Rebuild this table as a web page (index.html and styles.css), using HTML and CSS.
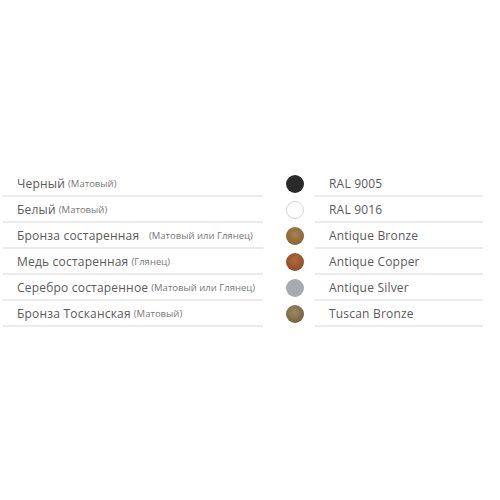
FILE: index.html
```html
<!DOCTYPE html>
<html lang="ru">
<head>
<meta charset="utf-8">
<link rel="stylesheet" href="styles.css">
</head>
<body>
<div class="colors">
  <div class="row">
    <div class="name">Черный <span class="note">(Матовый)</span></div>
    <div class="swatch"><span class="dot black"></span></div>
    <div class="code">RAL 9005</div>
  </div>
  <div class="row">
    <div class="name">Белый <span class="note">(Матовый)</span></div>
    <div class="swatch"><span class="dot white"></span></div>
    <div class="code">RAL 9016</div>
  </div>
  <div class="row">
    <div class="name">Бронза состаренная &nbsp;<span class="note">(Матовый или Глянец)</span></div>
    <div class="swatch"><span class="dot bronze"></span></div>
    <div class="code">Antique Bronze</div>
  </div>
  <div class="row">
    <div class="name">Медь состаренная <span class="note">(Глянец)</span></div>
    <div class="swatch"><span class="dot copper"></span></div>
    <div class="code">Antique Copper</div>
  </div>
  <div class="row">
    <div class="name">Серебро состаренное<span class="note">(Матовый или Глянец)</span></div>
    <div class="swatch"><span class="dot silver"></span></div>
    <div class="code">Antique Silver</div>
  </div>
  <div class="row">
    <div class="name">Бронза Тосканская <span class="note">(Матовый)</span></div>
    <div class="swatch"><span class="dot tuscan"></span></div>
    <div class="code">Tuscan Bronze</div>
  </div>
</div>
</body>
</html>
```
FILE: styles.css
```css
html, body {
  margin: 0;
  padding: 0;
  background: #fff;
}
body {
  font-family: "Open Sans", "Noto Sans", sans-serif;
  color: #5a5a5a;
}
.colors {
  margin: 171px 0 0 3px;
  display: flex;
  flex-direction: column;
}
.row {
  display: grid;
  grid-template-columns: 260px 52px 168px;
  height: 26px;
}
.name, .code {
  border-bottom: 2px solid #ebebeb;
  display: flex;
  align-items: center;
  padding-left: 14px;
  font-size: 12px;
  white-space: nowrap;
  letter-spacing: 0.2px;
}
.note {
  font-size: 9.5px;
  color: #777;
  margin-left: 3px;
  letter-spacing: 0;
}
.swatch {
  display: flex;
  align-items: center;
  padding-left: 23px;
}
.dot {
  width: 18px;
  height: 18px;
  border-radius: 50%;
  box-sizing: border-box;
  display: block;
}
.black { background: #2a2a2a; }
.white { background: #fff; border: 1px solid #d6d6d6; }
.bronze { background: radial-gradient(circle at 50% 40%, #a88350, #8a6535 70%, #6e4f28); }
.copper { background: radial-gradient(circle at 50% 40%, #b06a3e, #934d2a 70%, #6e3a20); }
.silver { background: #a9aab0; }
.tuscan { background: radial-gradient(circle at 45% 40%, #9c8a60, #7b6844 65%, #5a4a30); }
```
